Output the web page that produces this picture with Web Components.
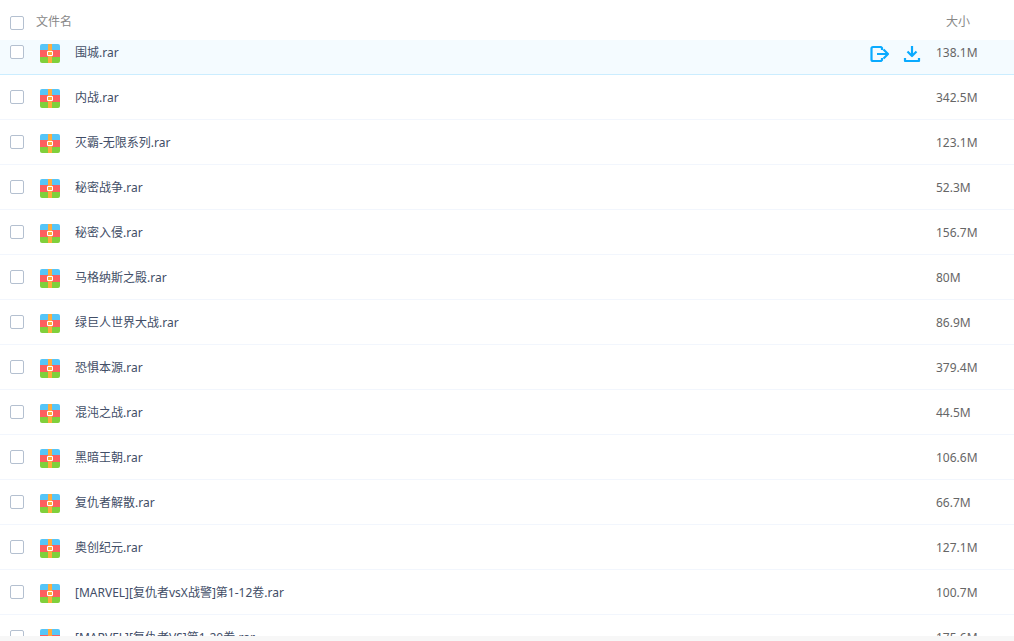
<!DOCTYPE html>
<html lang="zh-CN">
<head>
<meta charset="utf-8">
<title>文件列表</title>
<style>
  body { margin: 0; background: #f7f7f7; font: 12px/16px "Noto Sans", "Noto Sans CJK SC", sans-serif; }
</style>
</head>
<body>
<file-list></file-list>

<template id="archive-icon">
  <style>
    :host { display: block; width: 20px; height: 19px; }
    svg { display: block; }
  </style>
  <svg width="20" height="19" viewBox="0 0 20 19" aria-hidden="true">
    <path fill="#56c5f7" d="M0 6V2Q0 0 2 0H18Q20 0 20 2V6Z"/>
    <path fill="#fd5f5f" d="M0 6H20V13H0Z"/>
    <path fill="#80d03b" d="M0 13H20V17Q20 19 18 19H2Q0 19 0 17Z"/>
    <path fill="#ffab3d" d="M8 0H12V19H8Z"/>
    <path fill="#ffab3d" stroke="#fff" d="M7.500 7.500H12.500V11.500H7.500Z"/>
  </svg>
</template>

<template id="check-box">
  <style>
    :host { display: block; width: 14px; height: 14px; }
    input {
      appearance: none; display: block; box-sizing: border-box; width: 14px; height: 14px;
      margin: 0; border: 1px solid #b4c0d0; border-radius: 2px; background: #fff;
    }
    input:checked { background: #09aaff; border-color: #09aaff; }
  </style>
  <input type="checkbox">
</template>

<template id="row-actions">
  <style>
    :host { display: flex; justify-content: flex-end; gap: 12px; padding-right: 14px; }
    button { display: block; width: 20px; height: 20px; padding: 0; border: 0; background: none; color: #09aaff; cursor: pointer; }
    svg { display: block; fill: none; stroke: currentColor; stroke-width: 2.200; stroke-linejoin: round; }
  </style>
  <button type="button" aria-label="分享">
    <svg width="20" height="20" viewBox="0 0 20 20"><path d="M12 6V4L11 3H3Q1.500 3 1.500 4.500V15.500Q1.500 17 3 17H11L12 16V14M7 10H17.500M13.500 5.500L18 10L13.500 14.500"/></svg>
  </button>
  <button type="button" aria-label="下载">
    <svg width="20" height="20" viewBox="0 0 20 20"><path d="M10 2V12M5.500 7.500L10 12L14.500 7.500M3 14V17H17V14"/></svg>
  </button>
</template>

<template id="file-list">
  <style>
    :host { display: block; height: 100vh; box-sizing: border-box; padding-bottom: 5px; }
    .scroll { height: 100%; overflow-y: auto; scrollbar-width: none; background: #fff; }
    table { width: 100%; table-layout: fixed; border-collapse: separate; border-spacing: 0; }
    th, td { box-sizing: border-box; padding: 0; text-align: left; font-weight: normal; }
    th { position: sticky; top: 0; z-index: 1; height: 40px; padding-top: 4px; background: #fff; color: #888; }
    td { height: 45px; padding-top: 2px; border-bottom: 1px solid #f2f6fd; color: #666; }
    th.pick { width: 36px; padding-top: 6px; }
    td.pick { padding-top: 0; }
    .act { width: 120px; padding-top: 4px; }
    .size { width: 78px; }
    th.size { padding-left: 10px; }
    check-box { margin-left: 10px; }
    .file { display: flex; align-items: center; gap: 15px; padding-left: 4px; }
    .file a { color: #424e67; text-decoration: none; white-space: nowrap; }
    tr.hover td { background: #f4fbff; border-bottom-color: #cbedff; }
  </style>
  <div class="scroll">
    <table>
      <thead><tr>
        <th class="pick"><check-box label="全选"></check-box></th>
        <th>文件名</th>
        <th class="act"></th>
        <th class="size">大小</th>
      </tr></thead>
      <tbody></tbody>
    </table>
  </div>
</template>

<script>
  const stamp = (host, id) => {
    const root = host.attachShadow({ mode: "open" });
    root.append(document.getElementById(id).content.cloneNode(true));
    return root;
  };

  customElements.define("archive-icon", class extends HTMLElement {
    constructor() { super(); stamp(this, "archive-icon"); }
  });

  customElements.define("check-box", class extends HTMLElement {
    constructor() { super(); stamp(this, "check-box"); }
    connectedCallback() {
      this.shadowRoot.querySelector("input").setAttribute("aria-label", this.getAttribute("label"));
    }
  });

  customElements.define("row-actions", class extends HTMLElement {
    constructor() { super(); stamp(this, "row-actions"); }
  });

  const files = [
    ["围城.rar", "138.1M"],
    ["内战.rar", "342.5M"],
    ["灭霸-无限系列.rar", "123.1M"],
    ["秘密战争.rar", "52.3M"],
    ["秘密入侵.rar", "156.7M"],
    ["马格纳斯之殿.rar", "80M"],
    ["绿巨人世界大战.rar", "86.9M"],
    ["恐惧本源.rar", "379.4M"],
    ["混沌之战.rar", "44.5M"],
    ["黑暗王朝.rar", "106.6M"],
    ["复仇者解散.rar", "66.7M"],
    ["奥创纪元.rar", "127.1M"],
    ["[MARVEL][复仇者vsX战警]第1-12卷.rar", "100.7M"],
    ["[MARVEL][复仇者VS]第1-20卷.rar", "175.6M"]
  ];

  customElements.define("file-list", class extends HTMLElement {
    constructor() { super(); stamp(this, "file-list"); }
    connectedCallback() {
      this.shadowRoot.querySelector("tbody").innerHTML = files.map(([name, size], i) => `
        <tr class="${i === 0 ? "hover" : ""}">
          <td class="pick"><check-box label="${name}"></check-box></td>
          <td><div class="file"><archive-icon></archive-icon><a href="#">${name}</a></div></td>
          <td class="act">${i === 0 ? "<row-actions></row-actions>" : ""}</td>
          <td class="size">${size}</td>
        </tr>`).join("");
      this.shadowRoot.querySelector(".scroll").scrollTop = 10;
    }
  });
</script>
</body>
</html>
